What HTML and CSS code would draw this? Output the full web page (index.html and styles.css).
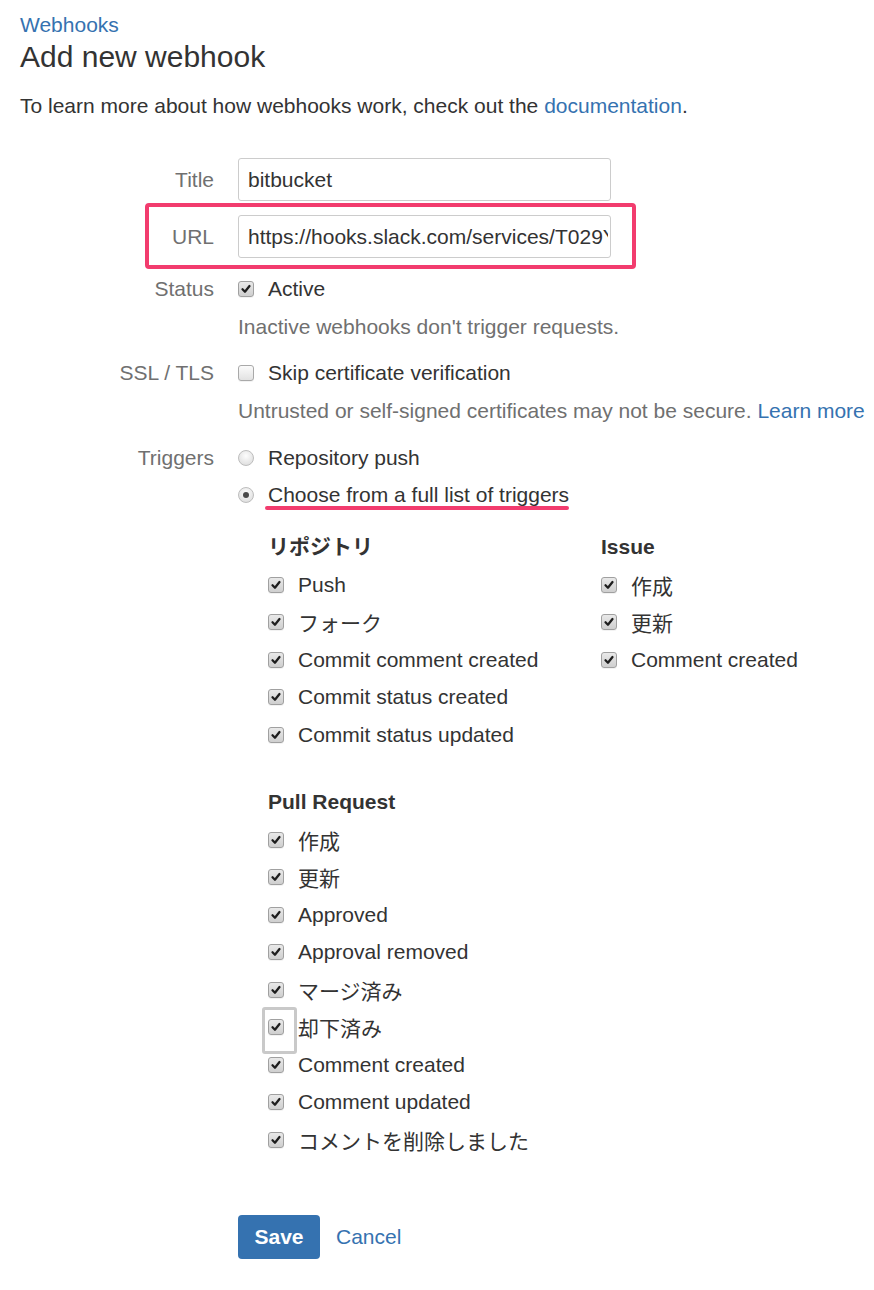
FILE: index.html
```
<!DOCTYPE html>
<html lang="ja">
<head>
<meta charset="utf-8">
<title>Add new webhook</title>
<link rel="stylesheet" href="styles.css">
</head>
<body>
<div class="page">
  <a class="crumb" href="#">Webhooks</a>
  <h1 class="title">Add new webhook</h1>
  <p class="intro">To learn more about how webhooks work, check out the <a href="#">documentation</a>.</p>

  <form class="form">
    <div class="field field-input">
      <label class="label">Title</label>
      <div class="control"><input class="text" type="text" value="bitbucket"></div>
    </div>

    <div class="field field-input field-url">
      <span class="annot-box"></span>
      <label class="label">URL</label>
      <div class="control"><input class="text text-url" type="text" value="https://hooks.slack.com/services/T029Y8QXW/B0F4L2N7A/xkq3Zt9"></div>
    </div>

    <div class="field field-status">
      <label class="label">Status</label>
      <div class="control">
        <div class="opt"><span class="cb on"><svg viewBox="0 0 16 16"><path d="M4 8.3 L6.8 11.2 L12 4.6"/></svg></span><span>Active</span></div>
        <div class="help">Inactive webhooks don't trigger requests.</div>
      </div>
    </div>

    <div class="field field-ssl">
      <label class="label">SSL / TLS</label>
      <div class="control">
        <div class="opt"><span class="cb"></span><span>Skip certificate verification</span></div>
        <div class="help">Untrusted or self-signed certificates may not be secure. <a href="#">Learn more</a></div>
      </div>
    </div>

    <div class="field field-triggers">
      <label class="label">Triggers</label>
      <div class="control">
        <div class="opt"><span class="rb"></span><span>Repository push</span></div>
        <div class="opt"><span class="rb on"></span><span class="underlined">Choose from a full list of triggers</span></div>

        <div class="groups">
          <div class="group">
            <div class="group-title">リポジトリ</div>
            <div class="opt"><span class="cb on"><svg viewBox="0 0 16 16"><path d="M4 8.3 L6.8 11.2 L12 4.6"/></svg></span><span>Push</span></div>
            <div class="opt"><span class="cb on"><svg viewBox="0 0 16 16"><path d="M4 8.3 L6.8 11.2 L12 4.6"/></svg></span><span>フォーク</span></div>
            <div class="opt"><span class="cb on"><svg viewBox="0 0 16 16"><path d="M4 8.3 L6.8 11.2 L12 4.6"/></svg></span><span>Commit comment created</span></div>
            <div class="opt"><span class="cb on"><svg viewBox="0 0 16 16"><path d="M4 8.3 L6.8 11.2 L12 4.6"/></svg></span><span>Commit status created</span></div>
            <div class="opt"><span class="cb on"><svg viewBox="0 0 16 16"><path d="M4 8.3 L6.8 11.2 L12 4.6"/></svg></span><span>Commit status updated</span></div>
          </div>
          <div class="group">
            <div class="group-title">Issue</div>
            <div class="opt"><span class="cb on"><svg viewBox="0 0 16 16"><path d="M4 8.3 L6.8 11.2 L12 4.6"/></svg></span><span>作成</span></div>
            <div class="opt"><span class="cb on"><svg viewBox="0 0 16 16"><path d="M4 8.3 L6.8 11.2 L12 4.6"/></svg></span><span>更新</span></div>
            <div class="opt"><span class="cb on"><svg viewBox="0 0 16 16"><path d="M4 8.3 L6.8 11.2 L12 4.6"/></svg></span><span>Comment created</span></div>
          </div>
        </div>

        <div class="group group-pr">
          <div class="group-title">Pull Request</div>
          <div class="opt"><span class="cb on"><svg viewBox="0 0 16 16"><path d="M4 8.3 L6.8 11.2 L12 4.6"/></svg></span><span>作成</span></div>
          <div class="opt"><span class="cb on"><svg viewBox="0 0 16 16"><path d="M4 8.3 L6.8 11.2 L12 4.6"/></svg></span><span>更新</span></div>
          <div class="opt"><span class="cb on"><svg viewBox="0 0 16 16"><path d="M4 8.3 L6.8 11.2 L12 4.6"/></svg></span><span>Approved</span></div>
          <div class="opt"><span class="cb on"><svg viewBox="0 0 16 16"><path d="M4 8.3 L6.8 11.2 L12 4.6"/></svg></span><span>Approval removed</span></div>
          <div class="opt"><span class="cb on"><svg viewBox="0 0 16 16"><path d="M4 8.3 L6.8 11.2 L12 4.6"/></svg></span><span>マージ済み</span></div>
          <div class="opt"><span class="cb on focus"><svg viewBox="0 0 16 16"><path d="M4 8.3 L6.8 11.2 L12 4.6"/></svg></span><span>却下済み</span></div>
          <div class="opt"><span class="cb on"><svg viewBox="0 0 16 16"><path d="M4 8.3 L6.8 11.2 L12 4.6"/></svg></span><span>Comment created</span></div>
          <div class="opt"><span class="cb on"><svg viewBox="0 0 16 16"><path d="M4 8.3 L6.8 11.2 L12 4.6"/></svg></span><span>Comment updated</span></div>
          <div class="opt"><span class="cb on"><svg viewBox="0 0 16 16"><path d="M4 8.3 L6.8 11.2 L12 4.6"/></svg></span><span>コメントを削除しました</span></div>
        </div>

        <div class="actions">
          <button class="btn-save" type="button">Save</button>
          <a class="cancel" href="#">Cancel</a>
        </div>
      </div>
    </div>
  </form>
</div>
</body>
</html>
```

FILE: styles.css
```
* { box-sizing: border-box; }

html, body {
  margin: 0;
  padding: 0;
  background: #ffffff;
}

body {
  font-family: "Liberation Sans", Arial, "Noto Sans CJK JP", sans-serif;
  font-size: 21px;
  color: #333333;
}

a {
  color: #3572b0;
  text-decoration: none;
}

.page {
  padding: 12px 20px 40px 20px;
}

.crumb {
  display: block;
  line-height: 25px;
  color: #3572b0;
}

.title {
  margin: 2px 0 0 0;
  font-size: 30px;
  line-height: 36px;
  font-weight: normal;
  color: #333333;
}

.intro {
  margin: 18px 0 0 0;
  line-height: 25px;
}

.form {
  margin-top: 40px;
}

.field {
  display: grid;
  grid-template-columns: 194px 1fr;
  column-gap: 24px;
}

.label {
  text-align: right;
  color: #707070;
  line-height: 37.5px;
}

.field-input .label {
  line-height: 43px;
}

.field-url {
  margin-top: 14px;
  position: relative;
}

.annot-box {
  position: absolute;
  left: 125px;
  top: -12px;
  width: 491px;
  height: 66px;
  border: 4px solid #f23c6e;
  border-radius: 4px;
  pointer-events: none;
}

.text {
  display: block;
  width: 373px;
  height: 43px;
  padding: 0 9px;
  border: 1px solid #cccccc;
  border-radius: 3px;
  font-family: "Liberation Sans", Arial, sans-serif;
  font-size: 21px;
  color: #333333;
  background: #ffffff;
  outline: none;
}

.text-url {
  padding-right: 2px;
}

.field-status { margin-top: 12px; }
.field-ssl { margin-top: 9px; }
.field-triggers { margin-top: 10px; }

.opt {
  display: flex;
  align-items: center;
  gap: 14px;
  height: 37.5px;
  white-space: nowrap;
}

.control > .opt:first-child,
.group .opt {
  padding-top: 1px;
}

.help {
  line-height: 37.5px;
  color: #707070;
  white-space: nowrap;
}

.cb {
  position: relative;
  flex: none;
  width: 16px;
  height: 16px;
  border: 1px solid #a9a9a9;
  border-radius: 3px;
  background: linear-gradient(#fbfbfb, #e2e2e2);
  box-shadow: 0 1px 0 rgba(0,0,0,0.05);
}

.cb.on {
  background: linear-gradient(#e9e9e9, #cfcfcf);
  border-color: #a0a0a0;
}

.cb svg {
  position: absolute;
  left: 0;
  top: 0;
  width: 14px;
  height: 14px;
}

.cb svg path {
  fill: none;
  stroke: #1e1e1e;
  stroke-width: 2.6;
  stroke-linecap: round;
  stroke-linejoin: round;
}

.cb.focus::after {
  content: "";
  position: absolute;
  left: -7px;
  top: -13px;
  width: 29px;
  height: 41px;
  border: 3px solid #c9c9c9;
  border-radius: 3px;
}

.rb {
  position: relative;
  flex: none;
  width: 16px;
  height: 16px;
  border: 1px solid #bdbdbd;
  border-radius: 50%;
  background: radial-gradient(circle at 50% 35%, #fdfdfd, #d8d8d8);
}

.rb.on::after {
  content: "";
  position: absolute;
  left: 4px;
  top: 4px;
  width: 6px;
  height: 6px;
  border-radius: 50%;
  background: #4a4a4a;
}

.underlined {
  position: relative;
  display: inline-block;
  line-height: 24px;
}

.underlined::after {
  content: "";
  position: absolute;
  left: -3px;
  right: 0;
  top: 23px;
  height: 4px;
  border-radius: 2px;
  background: #f23c6e;
}

.groups {
  display: grid;
  grid-template-columns: 333px 1fr;
  margin-top: 13px;
  padding-left: 30px;
}

.group-title {
  font-weight: bold;
  line-height: 37.5px;
  padding-top: 1px;
}

.group-pr {
  margin-top: 29px;
  padding-left: 30px;
}

.actions {
  display: flex;
  align-items: center;
  gap: 16px;
  margin-top: 57px;
}

.btn-save {
  width: 82px;
  height: 44px;
  border: none;
  border-radius: 4px;
  background: #3572b0;
  color: #ffffff;
  font-family: "Liberation Sans", Arial, sans-serif;
  font-size: 21px;
  font-weight: bold;
  padding: 0;
}

.cancel {
  color: #3572b0;
  line-height: 44px;
}
```
